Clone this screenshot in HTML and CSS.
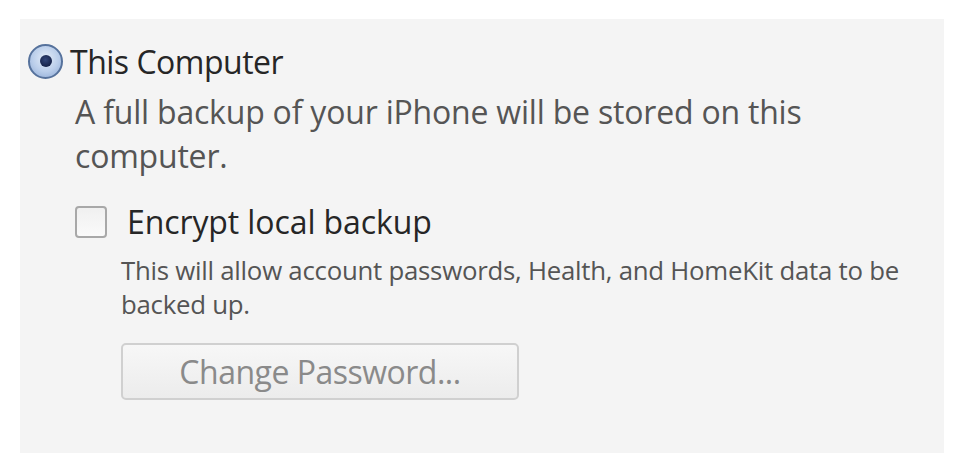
FILE: index.html
```html
<!DOCTYPE html>
<html>
<head>
<meta charset="utf-8">
<link rel="stylesheet" href="styles.css">
</head>
<body>
<div class="panel">
  <div class="radio-row">
    <span class="radio"><span class="dot"></span></span>
    <span class="radio-label">This Computer</span>
  </div>
  <p class="desc">A full backup of your iPhone will be stored on this computer.</p>
  <div class="check-row">
    <span class="checkbox"></span>
    <span class="check-label">Encrypt local backup</span>
  </div>
  <p class="note">This will allow account passwords, Health, and HomeKit data to be backed up.</p>
  <button class="btn" type="button">Change Password...</button>
</div>
</body>
</html>
```
FILE: styles.css
```css
html, body {
  margin: 0;
  padding: 0;
  background: #ffffff;
}
body {
  font-family: "Open Sans", "Noto Sans", sans-serif;
}
.panel {
  margin: 19px 16px 0 20px;
  height: 434px;
  background: #f4f4f4;
  box-sizing: border-box;
  padding: 25px 0 0 8px;
}
.radio-row {
  display: flex;
  align-items: center;
  gap: 7px;
  height: 34px;
}
.radio {
  width: 35px;
  height: 35px;
  box-sizing: border-box;
  border-radius: 50%;
  border: 2px solid #56729c;
  background: radial-gradient(circle at 50% 40%, #e4edf9 0%, #b9cdea 55%, #8aa7d3 100%);
  display: flex;
  align-items: center;
  justify-content: center;
}
.dot {
  width: 12px;
  height: 12px;
  border-radius: 50%;
  background: radial-gradient(circle at 45% 40%, #33477a 0%, #16234a 70%);
}
.radio-label {
  font-size: 32px;
  color: #262626;
  letter-spacing: -0.5px;
}
.desc {
  margin: 12px 0 0 47px;
  width: 780px;
  font-size: 32px;
  line-height: 44px;
  color: #555555;
  letter-spacing: -0.2px;
}
.check-row {
  display: flex;
  align-items: center;
  gap: 20px;
  margin: 22px 0 0 47px;
}
.checkbox {
  width: 32px;
  height: 32px;
  box-sizing: border-box;
  border: 2px solid #a8a8a8;
  border-radius: 4px;
  background: linear-gradient(#f0f0f0, #fafafa);
}
.check-label {
  font-size: 32px;
  color: #262626;
  letter-spacing: -0.1px;
}
.note {
  margin: 10px 0 0 93px;
  width: 785px;
  font-size: 25.8px;
  line-height: 34px;
  color: #555555;
  letter-spacing: -0.25px;
}
.btn {
  display: block;
  margin: 22px 0 0 93px;
  width: 398px;
  height: 57px;
  border: 2px solid #d0d0d0;
  border-radius: 5px;
  background: linear-gradient(#f7f7f7, #ececec);
  font-family: "Open Sans", "Noto Sans", sans-serif;
  font-size: 32px;
  color: #8a8a8a;
  letter-spacing: -0.5px;
  padding: 0;
}
```
